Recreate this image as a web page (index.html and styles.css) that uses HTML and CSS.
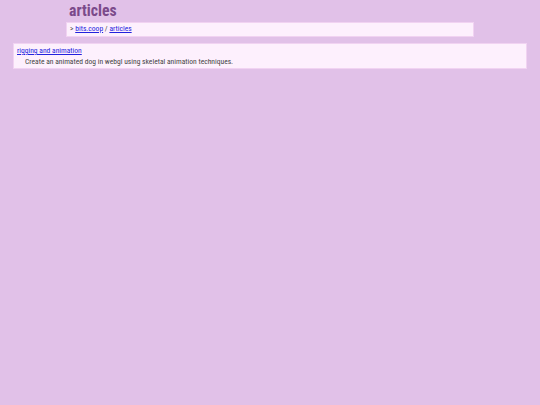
FILE: index.html
```html
<!DOCTYPE html>
<html>
<head>
<meta charset="utf-8">
<title>articles</title>
<link rel="stylesheet" href="styles.css">
</head>
<body>
<div class="top">
  <h1 class="title">articles</h1>
  <div class="crumbs">&gt; <a href="#">bits.coop</a> / <a href="#">articles</a></div>
</div>
<div class="list">
  <div class="item">
    <a class="item-link" href="#">rigging and animation</a>
    <div class="item-desc">Create an animated dog in webgl using skeletal animation techniques.</div>
  </div>
</div>
</body>
</html>
```
FILE: styles.css
```css
html, body {
  margin: 0;
  padding: 0;
  background: #e1c1e8;
}
body {
  font-family: "Roboto Condensed", "Liberation Sans", Arial, sans-serif;
  font-size: 7.56px;
  font-weight: 400;
  color: #444;
}
a {
  color: #2222dd;
}
.top {
  width: 408px;
  margin: 0 auto;
}
.title {
  margin: 0;
  padding: 2px 0 0 3px;
  height: 22px;
  box-sizing: border-box;
  font-size: 15.7px;
  line-height: 18px;
  font-weight: 700;
  color: #7b4a8b;
}
.crumbs {
  height: 15px;
  box-sizing: border-box;
  padding: 1px 3px 0;
  line-height: 10px;
  background: #fdf0fd;
  border: 1px solid #f1d3f2;
  color: #444;
}
.list {
  padding: 6px 13px 0;
}
.item {
  height: 26px;
  box-sizing: border-box;
  padding: 1px 3px 0;
  background: #fdf0fd;
  border: 1px solid #f1d3f2;
}
.item-link {
  display: block;
  line-height: 11px;
}
.item-desc {
  padding-left: 8px;
  line-height: 11px;
  color: #444;
}
```
